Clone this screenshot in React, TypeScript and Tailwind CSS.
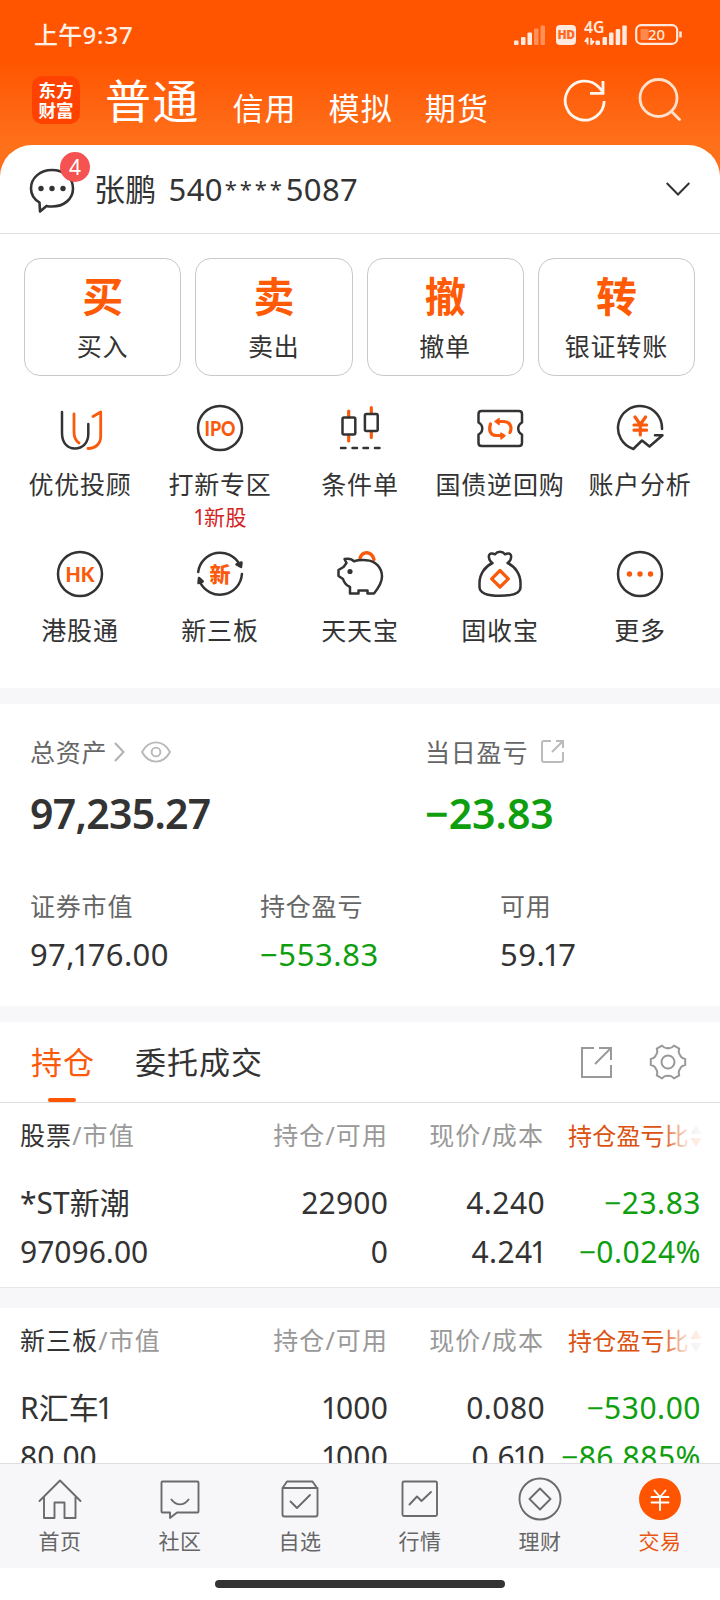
import React from 'react';

const INK = '#333333';
const ORANGE = '#fa5a0c';

// The "1" is set tighter than the other digits
const Num: React.FC<{ value: string }> = ({ value }) => (
  <>
    {value.split('').map((c, i) =>
      c === '1' ? <span key={i} className="-mx-[0.085em]">1</span> : <React.Fragment key={i}>{c}</React.Fragment>
    )}
  </>
);

const Icon: React.FC<{ size?: number; stroke?: string; width?: number; children: React.ReactNode }> = ({
  size = 48,
  stroke = INK,
  width = 2.5,
  children,
}) => (
  <svg
    width={size}
    height={size}
    viewBox={`0 0 ${size} ${size}`}
    fill="none"
    stroke={stroke}
    strokeWidth={width}
    strokeLinecap="round"
    strokeLinejoin="round"
    className="block shrink-0"
  >
    {children}
  </svg>
);

const Bars: React.FC<{ dim?: boolean }> = ({ dim }) => (
  <svg width="31" height="20" viewBox="0 0 31 20" fill="#ffe9de" className="block">
    <rect x="0" y="15.5" width="4.500" height="4.5" rx="1" />
    <rect x="7" y="12" width="4.500" height="8" rx="1" />
    <rect x="13.500" y="7.5" width="4.500" height="12.5" rx="1" />
    <rect x="20" y="3.5" width="4.500" height="16.5" rx="1" opacity={dim ? 0.4 : 1} />
    <rect x="26.500" y="0.5" width="4.500" height="19.5" rx="1" opacity={dim ? 0.4 : 1} />
  </svg>
);

const StatusBar = () => (
  <div className="flex h-[70px] items-center justify-between pr-[38px] pl-[34px] text-[#fff0e8]">
    <span className="text-[24px] leading-[30px] font-medium tracking-[0.2px]">
      上午<span className="tracking-[0.900px]">9:37</span>
    </span>
    <div className="-mt-px flex items-center">
      <Bars dim />
      <div className="ml-[11px] flex h-5 w-5 items-center justify-center rounded-[4px] bg-[#ffe9de] font-['Open_Sans'] text-[12px] leading-5 font-extrabold tracking-[-0.5px] text-[#ff6a20]">
        HD
      </div>
      <svg width="43" height="24" viewBox="0 0 43 24" fill="#ffe9de" className="ml-2 -mt-1 block overflow-visible">
        <text x="0" y="12" fontSize="15.500" fontWeight="600" textLength="20.500" lengthAdjust="spacingAndGlyphs">4G</text>
        <path d="M2.800 16.500h1.700v7H2.800v-2L0 20.500zM8 24H6.300v-7H8v2l2.800 1.500z" />
        <rect x="11.500" y="19.500" width="4.500" height="4.500" rx="1" />
        <rect x="18.500" y="16" width="4.500" height="8" rx="1" />
        <rect x="25" y="11.500" width="4.500" height="12.500" rx="1" />
        <rect x="31.700" y="8" width="4.500" height="16" rx="1" />
        <rect x="38.300" y="4.500" width="4.500" height="19.500" rx="1" />
      </svg>
      <svg width="47" height="21" viewBox="0 0 47 21" fill="none" className="ml-2 block overflow-visible">
        <rect x="1.200" y="1.200" width="41" height="18.600" rx="5" stroke="#ffe9de" strokeWidth="2.200" />
        <rect x="5.500" y="5" width="8" height="11" rx="1" fill="#fff" opacity="0.300" />
        <path d="M45.500 7.500v6" stroke="#ffe9de" strokeWidth="2.500" />
        <text x="13" y="15.500" fontSize="15" fontWeight="500" fill="#ffe9de" textLength="17" lengthAdjust="spacingAndGlyphs">20</text>
      </svg>
    </div>
  </div>
);

const TopTabs = () => (
  <div className="flex h-[75px] items-start pr-[36px] pl-8 text-white">
    <div className="mt-[6px] flex h-12 w-12 flex-col items-center justify-center rounded-[10px] bg-[#ff4200] text-[17.500px] leading-[20px] font-bold">
      <span>东方</span>
      <span>财富</span>
    </div>
    <div className="ml-[25px] mt-[6px] text-[46px] leading-[48px] tracking-[1.200px]">普通</div>
    <div className="mt-[18px] ml-[33px] flex gap-[32px] text-[31px] leading-[40px] tracking-[1.100px]">
      <span>信用</span>
      <span>模拟</span>
      <span>期货</span>
    </div>
    <div className="mt-[6px] ml-auto flex gap-[28px]">
      <Icon stroke="#fff6f0" width={2.800}>
        <g strokeLinecap="butt" strokeLinejoin="miter">
          <path d="M44.200 25A19.500 19.500 0 1 1 38.600 10.900L43 16" />
          <path d="M43 5v12.300H30" />
        </g>
      </Icon>
      <Icon stroke="#ffe0cc" width={2.800}>
        <circle cx="22.500" cy="22" r="18.500" />
        <path d="M35.500 35.500l8 8" />
      </Icon>
    </div>
  </div>
);

const AccountRow = () => (
  <div className="flex h-[89px] items-center rounded-t-[32px] border-b border-[#e2e2e4] bg-white pr-[30px] pl-[28px]">
    <div className="relative -mt-px">
      <Icon width={2.600}>
        <path d="M11.500 37.500C5.500 34 3 29 3 23.500C3 12.500 12.500 5 24 5s21 7.500 21 18.500S35.500 41.500 24 41.500c-2 0-4-.2-5.500-.6L12 46.500z" />
        <g fill={INK} stroke="none">
          <circle cx="13" cy="23.500" r="2.700" />
          <circle cx="24" cy="23.500" r="2.700" />
          <circle cx="35" cy="23.500" r="2.700" />
        </g>
      </Icon>
      <div className="absolute -top-[13px] left-[32px] flex h-[30px] w-[30px] items-center justify-center rounded-full bg-[#f55252] text-[21px] leading-[30px] text-white">
        4
      </div>
    </div>
    <span className="ml-[18px] text-[31px] leading-[40px] tracking-[0.3px] whitespace-nowrap text-[#333]">
      张鹏<span className="ml-[12px]">540</span>
      <span className="mr-px ml-[2px] inline-block align-[4px] text-[22px] leading-[22px] tracking-[2.900px]">****</span>5087
    </span>
    <svg width="24" height="14" viewBox="0 0 24 14" fill="none" stroke={INK} strokeWidth="2" className="ml-auto block">
      <path d="M.7 1L12 12.500L23.300 1" />
    </svg>
  </div>
);

const actions = [
  { mark: '买', label: '买入' },
  { mark: '卖', label: '卖出' },
  { mark: '撤', label: '撤单' },
  { mark: '转', label: '银证转账' },
];

const iconText = { fill: ORANGE, stroke: 'none', fontWeight: 900, textAnchor: 'middle' as const };

const shortcuts: { label: string; note?: string; icon: React.ReactNode }[] = [
  {
    label: '优优投顾',
    icon: (
      <Icon>
        <path d="M6 8v21c0 10 5.500 15.500 13 15.500S32.300 39 32.300 30V20" />
        <g stroke={ORANGE} strokeWidth="2.800">
          <path d="M18 10v18c0 5 1.500 8.500 5 11" />
          <path d="M37 12.500L44.700 8v24.500c0 7-5 12-12.700 12" />
        </g>
      </Icon>
    ),
  },
  {
    label: '打新专区',
    note: '1新股',
    icon: (
      <Icon>
        <circle cx="24" cy="24" r="22" />
        <text x="24" y="31.500" fontSize="21" textLength="31" lengthAdjust="spacingAndGlyphs" fontFamily="Lato" {...iconText}>IPO</text>
      </Icon>
    ),
  },
  {
    label: '条件单',
    icon: (
      <Icon>
        <path d="M12.700 7v6M12.700 31v6M35.300 3.500v6M35.300 27.500v6" stroke={ORANGE} strokeWidth="3.200" />
        <rect x="6.500" y="13.500" width="12.800" height="17" rx="1.500" />
        <rect x="28.900" y="10" width="12.800" height="17" rx="1.500" />
        <path d="M5 44h4.500M16.500 44H21M27.500 44H32M39 44h4.500" />
      </Icon>
    ),
  },
  {
    label: '国债逆回购',
    icon: (
      <Icon>
        <path d="M5.500 7h37.500q3 0 3 3v8.500c-5 2.500-5 9.500 0 12V39q0 3-3 3H5.500q-3 0-3-3v-8.500c5-2.500 5-9.500 0-12V10q0-3 3-3z" />
        <g stroke={ORANGE} strokeWidth="3.200">
          <path d="M14.500 20C12.500 26 14 31 20 31.500h4" />
          <path d="M34 28.500C36.500 22.500 34 18 28 17.500h-4" />
          <path d="M25 29v6l4-3.300zM23 14.500v6l-4-3z" fill={ORANGE} strokeWidth="1.500" />
        </g>
      </Icon>
    ),
  },
  {
    label: '账户分析',
    icon: (
      <Icon>
        <path d="M46 25A22 22 0 1 0 17.300 45L26 36.500l7.500 6L46.500 31.200H39" />
        <path d="M19 13l5.300 7.500L29.600 13M24.300 20.500V31M18 21h12.600M18 26.200h12.600" stroke={ORANGE} strokeWidth="3.200" />
      </Icon>
    ),
  },
  {
    label: '港股通',
    icon: (
      <Icon>
        <circle cx="24" cy="24" r="22" />
        <text x="24" y="31.500" fontSize="21" textLength="29" lengthAdjust="spacingAndGlyphs" fontFamily="Lato" {...iconText}>HK</text>
      </Icon>
    ),
  },
  {
    label: '新三板',
    icon: (
      <Icon>
        <path d="M2.200 22A22 22 0 0 1 43.500 14.500M45.900 24A22 22 0 0 1 4 32" />
        <path d="M40.500 14.500l4.500 2.500l.5-4.500zM2.500 33l.5-5l3.700 3.500z" fill={INK} />
        <text x="24" y="31.500" fontSize="21" {...iconText}>新</text>
      </Icon>
    ),
  },
  {
    label: '天天宝',
    icon: (
      <Icon>
        <path d="M24 8c3-7.500 11.500-7 14 1.500" stroke={ORANGE} strokeWidth="3.400" />
        <path d="M8.500 9c4-.8 7-.5 9.500 2.300c4-1.300 8-1.300 12-1.100c10 .3 16 8 16 16.300c0 6.500-4 12-8 17h-6.500v-3H22.500v3H14v-6.500c-3.500-1.500-6-4.500-7-8L2.500 26v-6l5-3L10.500 13z" />
        <circle cx="14" cy="21.500" r="2.600" fill={INK} stroke="none" />
      </Icon>
    ),
  },
  {
    label: '固收宝',
    icon: (
      <Icon>
        <path d="M16.500 13C12.500 11 11.500 4 15 3.500q2-.3 4 .8q2-2.500 5-2.500t5 2.500q2-1.100 4-.8C36.500 4 35.500 11 31.500 13C39 16.500 44.500 24 44.500 33v4c0 6.500-10 8.800-20.500 8.800S3.500 43.500 3.500 37v-4C3.500 24 9 16.500 16.500 13z" />
        <path d="M24 20.500l8.300 8.300L24 37l-8.300-8.200z" stroke={ORANGE} strokeWidth="3.200" />
      </Icon>
    ),
  },
  {
    label: '更多',
    icon: (
      <Icon>
        <circle cx="24" cy="24" r="22" />
        <g fill={ORANGE} stroke="none">
          <circle cx="13.500" cy="24" r="2.700" />
          <circle cx="24" cy="24" r="2.700" />
          <circle cx="34.500" cy="24" r="2.700" />
        </g>
      </Icon>
    ),
  },
];

const Shortcuts = () => (
  <div className="grid grid-cols-5 px-[10px] pt-[28px]">
    {shortcuts.map(s => (
      <div key={s.label} className="flex h-[146px] flex-col items-center whitespace-nowrap">
        {s.icon}
        <span className="mt-[16px] text-[25px] leading-[32px] tracking-[0.800px] text-[#333]">{s.label}</span>
        {s.note && <span className="mt-px ml-[2px] text-[21px] leading-[32px] tracking-[0.500px] text-[#d42323]"><Num value={s.note} /></span>}
      </div>
    ))}
  </div>
);

const Assets = () => (
  <div className="h-[302px] pt-[30px] pl-[30px] text-[25px] leading-[36px] tracking-[0.800px] text-[#666]">
    <div className="flex">
      <div className="w-[395px]">
        <div className="flex items-center">
          总资产
          <svg width="11" height="20" viewBox="0 0 11 20" fill="none" stroke="#b0b0b0" strokeWidth="2" className="ml-[7px] -mt-px">
            <path d="M1 1l8.500 9L1 19" />
          </svg>
          <svg width="30" height="22" viewBox="0 0 30 22" fill="none" stroke="#b8b8b8" strokeWidth="1.900" className="ml-[16px] -mt-px">
            <path d="M1 11C8-1.800 22-1.800 29 11C22 23.800 8 23.800 1 11z" strokeLinejoin="round" />
            <circle cx="15" cy="11" r="4.400" />
          </svg>
        </div>
        <div className="mt-[17px] text-[41px] leading-[52px] font-semibold tracking-[-0.700px] text-[#333]">97,235.27</div>
      </div>
      <div>
        <div className="flex items-center">
          当日盈亏
          <svg width="23" height="23" viewBox="0 0 23 23" fill="none" stroke="#bbb" strokeWidth="2" className="ml-[13px] -mt-px">
            <path d="M10 1H3Q1 1 1 3v17q0 2 2 2h17q2 0 2-2v-8M15 1h7v7M22 1L11 12" />
          </svg>
        </div>
        <div className="mt-[17px] text-[41px] leading-[52px] font-semibold tracking-normal text-[#0e9e0e]">−23.83</div>
      </div>
    </div>
    <div className="mt-[49px] flex">
      <div className="w-[230px]">
        证券市值
        <div className="mt-[12px] text-[31px] tracking-[0.350px] text-[#333]"><Num value="97,176.00" /></div>
      </div>
      <div className="w-[240px]">
        持仓盈亏
        <div className="mt-[12px] text-[31px] tracking-[0.600px] text-[#0e9e0e]">−553.83</div>
      </div>
      <div>
        可用
        <div className="mt-[12px] text-[31px] tracking-[0.500px] text-[#333]"><Num value="59.17" /></div>
      </div>
    </div>
  </div>
);

const polar = (deg: number, r: number) => {
  const a = (deg * Math.PI) / 180;
  return `${(20 + r * Math.cos(a)).toFixed(2)} ${(20 + r * Math.sin(a)).toFixed(2)}`;
};

const gearPath =
  [0, 60, 120, 180, 240, 300]
    .map((t, i) => `${i ? 'L' : 'M'}${polar(t - 10, 17.5)}L${polar(t + 10, 17.5)}Q${polar(t + 17, 13.5)} ${polar(t + 30, 14)}Q${polar(t + 43, 13.5)} ${polar(t + 50, 17.5)}`)
    .join('') + 'Z';

const HoldingTabs = () => (
  <div className="flex h-[81px] items-center border-b border-[#dcdcde] pr-[32px] pl-[31px] text-[31px] leading-[40px] tracking-[1px]">
    <div className="relative text-[#fa5a0c]">
      持仓
      <div className="absolute top-[56px] left-[17px] h-1 w-7 rounded-full bg-[#ff5500]" />
    </div>
    <div className="ml-[40px] text-[#333]">委托成交</div>
    <div className="ml-auto flex items-center gap-[36px]">
      <svg width="31" height="31" viewBox="0 0 31 31" fill="none" stroke="#999" strokeWidth="2">
        <path d="M13 1H1v29h29V18M18 1h12v12M30 1L14 17" />
      </svg>
      <Icon size={40} stroke="#999" width={2}>
        <path d={gearPath} />
        <circle cx="20" cy="20" r="6.500" />
      </Icon>
    </div>
  </div>
);

interface Holding {
  title: string;
  up?: boolean;
  name: string;
  cells: string[][];
}

const holdings: Holding[] = [
  {
    title: '股票',
    name: '*ST新潮',
    cells: [
      ['22900', '4.240', '−23.83'],
      ['97096.00', '0', '4.241', '−0.024%'],
    ],
  },
  {
    title: '新三板',
    up: true,
    name: 'R汇车1',
    cells: [
      ['1000', '0.080', '−530.00'],
      ['80.00', '1000', '0.610', '−86.885%'],
    ],
  },
];

const HoldingTable: React.FC<{ data: Holding }> = ({ data }) => {
  const rows = [[data.name, ...data.cells[0]], data.cells[1]];
  return (
    <div className="h-[184px] shrink-0">
      <div className="flex h-[65px] items-center text-[25px] tracking-[1.100px] text-[#999]">
        <div className="w-[210px] pl-5"><span className="text-[#333]">{data.title}</span>/市值</div>
        <div className="w-[178px] text-right">持仓/可用</div>
        <div className="w-[156px] text-right">现价/成本</div>
        <div className="relative ml-[24px] flex items-center text-[24px] tracking-[0.200px] text-[#dc5210]">
          持仓盈亏比
          <svg width="12" height="24" viewBox="0 0 12 24" className="ml-px block">
            <path d="M6 1l5.500 9H.5z" fill={data.up ? '#ff7a3c' : '#bbb'} />
            <path d="M6 23l5.500-9H.5z" fill={data.up ? '#bbb' : '#ff7a3c'} />
          </svg>
          <div className="absolute top-0 -right-px h-full w-[42px] bg-linear-to-r from-white/0 via-white/80 via-60% to-white/90" />
        </div>
      </div>
      <div className="pt-[10px] text-[30px] leading-[49px] text-[#333]">
        {rows.map((r, i) => (
          <div key={i} className="flex">
            <div className="w-[210px] pl-5"><Num value={r[0]} /></div>
            <div className="w-[178px] text-right tracking-[0.200px]"><Num value={r[1]} /></div>
            <div className="w-[157px] text-right tracking-[0.400px]"><Num value={r[2]} /></div>
            <div className="w-[156px] text-right tracking-[0.500px] text-[#0e9e0e]"><Num value={r[3]} /></div>
          </div>
        ))}
      </div>
    </div>
  );
};

const navItems = [
  {
    label: '首页',
    icon: <path d="M1.500 24L22 3.500L42.500 24M6 20.500v20.500h10.500V25.500h10V41H37.500V20.500" />,
  },
  {
    label: '社区',
    icon: <path d="M4.500 4.500h35q1 0 1 1v29q0 1-1 1H19L12 41v-5.500H4.500q-1 0-1-1v-29q0-1 1-1zM13.500 22.500c4.500 6.500 12.500 6.500 17 0" />,
  },
  {
    label: '自选',
    icon: <path d="M4.500 11L9 4.500h25.500L39 11M4.500 11H39.500v26.500q0 2-2 2h-31q-2 0-2-2zM12.500 24.500l6.500 6.500l13-13" />,
  },
  {
    label: '行情',
    icon: (
      <>
        <rect x="4.500" y="4.500" width="34.500" height="34.500" rx="1.500" />
        <path d="M11.500 27.500l7.500-8l4.500 4.500l9.500-9" />
      </>
    ),
  },
  {
    label: '理财',
    icon: (
      <>
        <circle cx="22" cy="22" r="20.500" />
        <path d="M22 11.500L32.500 22L22 32.500L11.500 22z" />
      </>
    ),
  },
  {
    label: '交易',
    active: true,
    icon: (
      <>
        <circle cx="22" cy="22" r="21" fill="#ff5500" stroke="none" />
        <path d="M16.500 13.500l5.500 6.500l5.500-6.500M22 20v13M13.500 20h17M13.500 25.500h17" stroke="#fff" />
      </>
    ),
  },
];

const BottomNav = () => (
  <div className="grid h-[105px] shrink-0 grid-cols-6 border-t border-[#dedee2] bg-[#f7f7fa]">
    {navItems.map(n => (
      <div key={n.label} className="flex flex-col items-center pt-[13px]">
        <Icon size={44} stroke="#6b6b6b" width={1.900}>{n.icon}</Icon>
        <span className={`mt-[5px] text-[21px] leading-[30px] tracking-[0.500px] ${n.active ? 'text-[#e8560f]' : 'text-[#666]'}`}>
          {n.label}
        </span>
      </div>
    ))}
  </div>
);

const App: React.FC = () => (
  <div className="flex h-[1600px] w-[720px] flex-col overflow-hidden bg-white font-['Noto_Sans','Noto_Sans_CJK_SC',sans-serif]" lang="zh-CN">
    <div className="shrink-0 bg-linear-to-b from-[#ff5500] from-[62px] to-[#ff701a] to-[145px]">
      <StatusBar />
      <TopTabs />
      <AccountRow />
    </div>
    <div className="h-[454px] shrink-0 pt-6">
      <div className="flex gap-[14px] pr-[25px] pl-6">
        {actions.map(a => (
          <div key={a.label} className="flex h-[118px] flex-1 flex-col items-center rounded-[16px] border border-[#c9c9cc] pt-[15px]">
            <span className="text-[41px] leading-[44px] font-bold text-[#ff5a05]">{a.mark}</span>
            <span className="mt-[12px] text-[25px] leading-[32px] tracking-[0.800px] text-[#333]">{a.label}</span>
          </div>
        ))}
      </div>
      <Shortcuts />
    </div>
    <div className="h-4 shrink-0 bg-[#f7f7fa]" />
    <Assets />
    <div className="h-4 shrink-0 bg-[#f7f7fa]" />
    <HoldingTabs />
    <div className="flex min-h-0 flex-1 flex-col overflow-hidden">
      <HoldingTable data={holdings[0]} />
      <div className="h-[21px] shrink-0 border-t border-[#e8e8ea] bg-[#f7f7fa]" />
      <HoldingTable data={holdings[1]} />
    </div>
    <BottomNav />
    <div className="flex h-8 shrink-0 items-start justify-center pt-3">
      <div className="h-2 w-[290px] rounded-full bg-[#333]" />
    </div>
  </div>
);

export default App;
